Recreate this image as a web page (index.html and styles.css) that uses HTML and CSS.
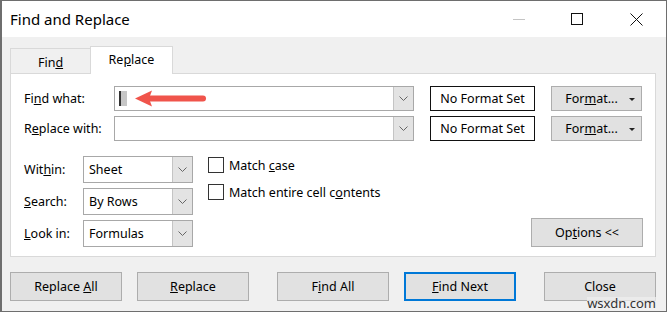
FILE: index.html
```html
<!DOCTYPE html>
<html lang="en">

<head>
    <meta charset="UTF-8">
    <meta name="viewport" content="width=device-width, initial-scale=1.0">
    <title>Find and Replace</title>
    <link rel="stylesheet" href="styles.css">
</head>

<body>
    <div class="window">
        <div class="titlebar">
            <span class="title">Find and Replace</span>
            <div class="controls">
                <span class="ctl ctl-min"></span>
                <span class="ctl ctl-max"></span>
                <svg class="ctl ctl-close" width="13" height="13" viewBox="0 0 13 13">
                    <path d="M0.5 0.5 L12.5 12.5 M12.5 0.5 L0.5 12.5" stroke="#111" stroke-width="1" fill="none"/>
                </svg>
            </div>
        </div>

        <div class="dialog-body">
            <div class="tabs">
                <div class="tab">Fin<u>d</u></div>
                <div class="tab active">Re<u>p</u>lace</div>
            </div>

            <div class="panel">
                <div class="field-row">
                    <label class="field-label">Fi<u>n</u>d what:</label>
                    <div class="combo">
                        <div class="combo-text">
                            <span class="caret"></span>
                            <svg class="arrow" width="72" height="17" viewBox="0 0 72 17">
                                <line x1="12" y1="8.5" x2="68" y2="8.5" stroke="#f0544b" stroke-width="6" stroke-linecap="round"/>
                                <polygon points="0,8.5 17,0.5 14,8.5 17,16.5" fill="#f0544b"/>
                            </svg>
                        </div>
                        <div class="combo-btn">
                            <svg width="9" height="6" viewBox="0 0 9 6"><polyline points="0.5,0.5 4.5,4.5 8.5,0.5" fill="none" stroke="#666" stroke-width="1"/></svg>
                        </div>
                    </div>
                    <div class="format-box">No Format Set</div>
                    <button class="btn btn-format">For<u>m</u>at... <span class="tri"></span></button>
                </div>
                <div class="field-row">
                    <label class="field-label">R<u>e</u>place with:</label>
                    <div class="combo">
                        <div class="combo-text"></div>
                        <div class="combo-btn">
                            <svg width="9" height="6" viewBox="0 0 9 6"><polyline points="0.5,0.5 4.5,4.5 8.5,0.5" fill="none" stroke="#666" stroke-width="1"/></svg>
                        </div>
                    </div>
                    <div class="format-box">No Format Set</div>
                    <button class="btn btn-format">For<u>m</u>at... <span class="tri"></span></button>
                </div>

                <div class="options-area">
                    <div class="select-grid">
                        <label>Wit<u>h</u>in:</label>
                        <div class="select"><span>Sheet</span><div class="combo-btn"><svg width="9" height="6" viewBox="0 0 9 6"><polyline points="0.5,0.5 4.5,4.5 8.5,0.5" fill="none" stroke="#666" stroke-width="1"/></svg></div></div>
                        <label><u>S</u>earch:</label>
                        <div class="select"><span>By Rows</span><div class="combo-btn"><svg width="9" height="6" viewBox="0 0 9 6"><polyline points="0.5,0.5 4.5,4.5 8.5,0.5" fill="none" stroke="#666" stroke-width="1"/></svg></div></div>
                        <label><u>L</u>ook in:</label>
                        <div class="select"><span>Formulas</span><div class="combo-btn"><svg width="9" height="6" viewBox="0 0 9 6"><polyline points="0.5,0.5 4.5,4.5 8.5,0.5" fill="none" stroke="#666" stroke-width="1"/></svg></div></div>
                    </div>

                    <div class="checks">
                        <div class="check"><span class="box"></span><span>Match <u>c</u>ase</span></div>
                        <div class="check"><span class="box"></span><span>Match entire cell c<u>o</u>ntents</span></div>
                    </div>

                    <button class="btn btn-options">Op<u>t</u>ions &lt;&lt;</button>
                </div>
            </div>

            <div class="actions">
                <button class="btn btn-action">Replace <u>A</u>ll</button>
                <button class="btn btn-action gap-s"><u>R</u>eplace</button>
                <button class="btn btn-action gap-l">F<u>i</u>nd All</button>
                <button class="btn btn-action gap-s default"><u>F</u>ind Next</button>
                <button class="btn btn-action gap-l">Close</button>
            </div>
        </div>

        <span class="watermark">wsxdn.com</span>
    </div>
</body>

</html>
```

FILE: styles.css
```css
body {
    margin: 0;
    padding: 0;
    font-family: "Noto Sans", "Open Sans", sans-serif;
    font-size: 12.5px;
    color: #000;
}

.window {
    position: relative;
    width: 667px;
    height: 312px;
    box-sizing: border-box;
    border: 1px solid #6e6e6e;
    border-left-width: 2px;
    background-color: #f0f0f0;
    display: flex;
    flex-direction: column;
}

.titlebar {
    height: 36px;
    background-color: #fff;
    display: flex;
    align-items: center;
    padding-left: 8px;
}

.title {
    font-size: 15px;
    flex: 1;
    margin-top: -1px;
}

.controls {
    display: flex;
    align-items: center;
}

.ctl {
    display: block;
}

.ctl-min {
    width: 12px;
    height: 1px;
    background-color: #c4c4c4;
    margin-right: 46px;
}

.ctl-max {
    width: 10px;
    height: 10px;
    border: 1px solid #111;
    margin-right: 47px;
}

.ctl-close {
    margin-right: 23px;
}

.dialog-body {
    flex: 1;
    padding: 10px 10px 0 8px;
}

.tabs {
    display: flex;
    align-items: flex-end;
    height: 27px;
    margin-bottom: -1px;
    position: relative;
    z-index: 1;
}

.tab {
    height: 26px;
    box-sizing: border-box;
    width: 80px;
    text-align: center;
    line-height: 28px;
    border-top: 1px solid #d9d9d9;
    border-left: 1px solid #d9d9d9;
}

.tab.active {
    height: 28px;
    width: 83px;
    background-color: #fff;
    border: 1px solid #d9d9d9;
    border-bottom: none;
    line-height: 26px;
}

.panel {
    background-color: #fff;
    border: 1px solid #d9d9d9;
    height: 184px;
    box-sizing: border-box;
    padding: 12px 12px 0 13px;
}

.field-row {
    display: flex;
    align-items: center;
    height: 25px;
    margin-bottom: 5px;
}

.field-label {
    width: 90px;
}

.combo {
    display: flex;
    width: 300px;
    height: 25px;
    box-sizing: border-box;
    border: 1px solid #a8a8a8;
}

.combo-text {
    flex: 1;
    display: flex;
    align-items: center;
    padding-left: 4px;
}

.caret {
    width: 6px;
    height: 15px;
    background-color: #c6c6c6;
    border-left: 2px solid #333;
}

.arrow {
    margin-left: 8px;
}

.combo-btn {
    width: 19px;
    background-color: #e3e3e3;
    border-left: 1px solid #c4c4c4;
    display: flex;
    align-items: center;
    justify-content: center;
}

.format-box {
    width: 105px;
    height: 25px;
    box-sizing: border-box;
    border: 1px solid #111;
    margin-left: 16px;
    text-align: center;
    line-height: 23px;
}

.btn {
    font-family: inherit;
    font-size: inherit;
    color: #000;
    background-color: #e1e1e1;
    border: 1px solid #adadad;
    padding: 0;
    cursor: pointer;
}

.btn-format {
    width: 91px;
    height: 25px;
    margin-left: 16px;
    text-align: right;
    padding-right: 6px;
}

.tri {
    display: inline-block;
    width: 0;
    height: 0;
    border-left: 3px solid transparent;
    border-right: 3px solid transparent;
    border-top: 3px solid #222;
    vertical-align: middle;
    margin-left: 8px;
}

.options-area {
    display: flex;
    margin-top: 15px;
}

.select-grid {
    display: grid;
    grid-template-columns: 59px 110px;
    row-gap: 5px;
    align-items: center;
}

.select {
    display: flex;
    height: 27px;
    box-sizing: border-box;
    border: 1px solid #a8a8a8;
}

.select span {
    flex: 1;
    padding-left: 5px;
    line-height: 25px;
}

.checks {
    margin-left: 15px;
    padding-top: 1px;
}

.check {
    display: flex;
    align-items: center;
    height: 16px;
    margin-bottom: 11px;
}

.box {
    width: 14px;
    height: 14px;
    border: 1px solid #333;
    margin-right: 5px;
}

.btn-options {
    margin-left: auto;
    align-self: flex-end;
    width: 112px;
    height: 29px;
}

.actions {
    display: flex;
    margin-top: 15px;
}

.btn-action {
    width: 112px;
    height: 29px;
}

.gap-s {
    margin-left: 15px;
}

.gap-l {
    margin-left: 28px;
}

.btn-action.default {
    border: 2px solid #0078d7;
}

.watermark {
    position: absolute;
    right: 10px;
    bottom: 1px;
    font-size: 13px;
    color: #333;
    background-color: rgba(240, 240, 240, 0.7);
    line-height: 13px;
}
```
